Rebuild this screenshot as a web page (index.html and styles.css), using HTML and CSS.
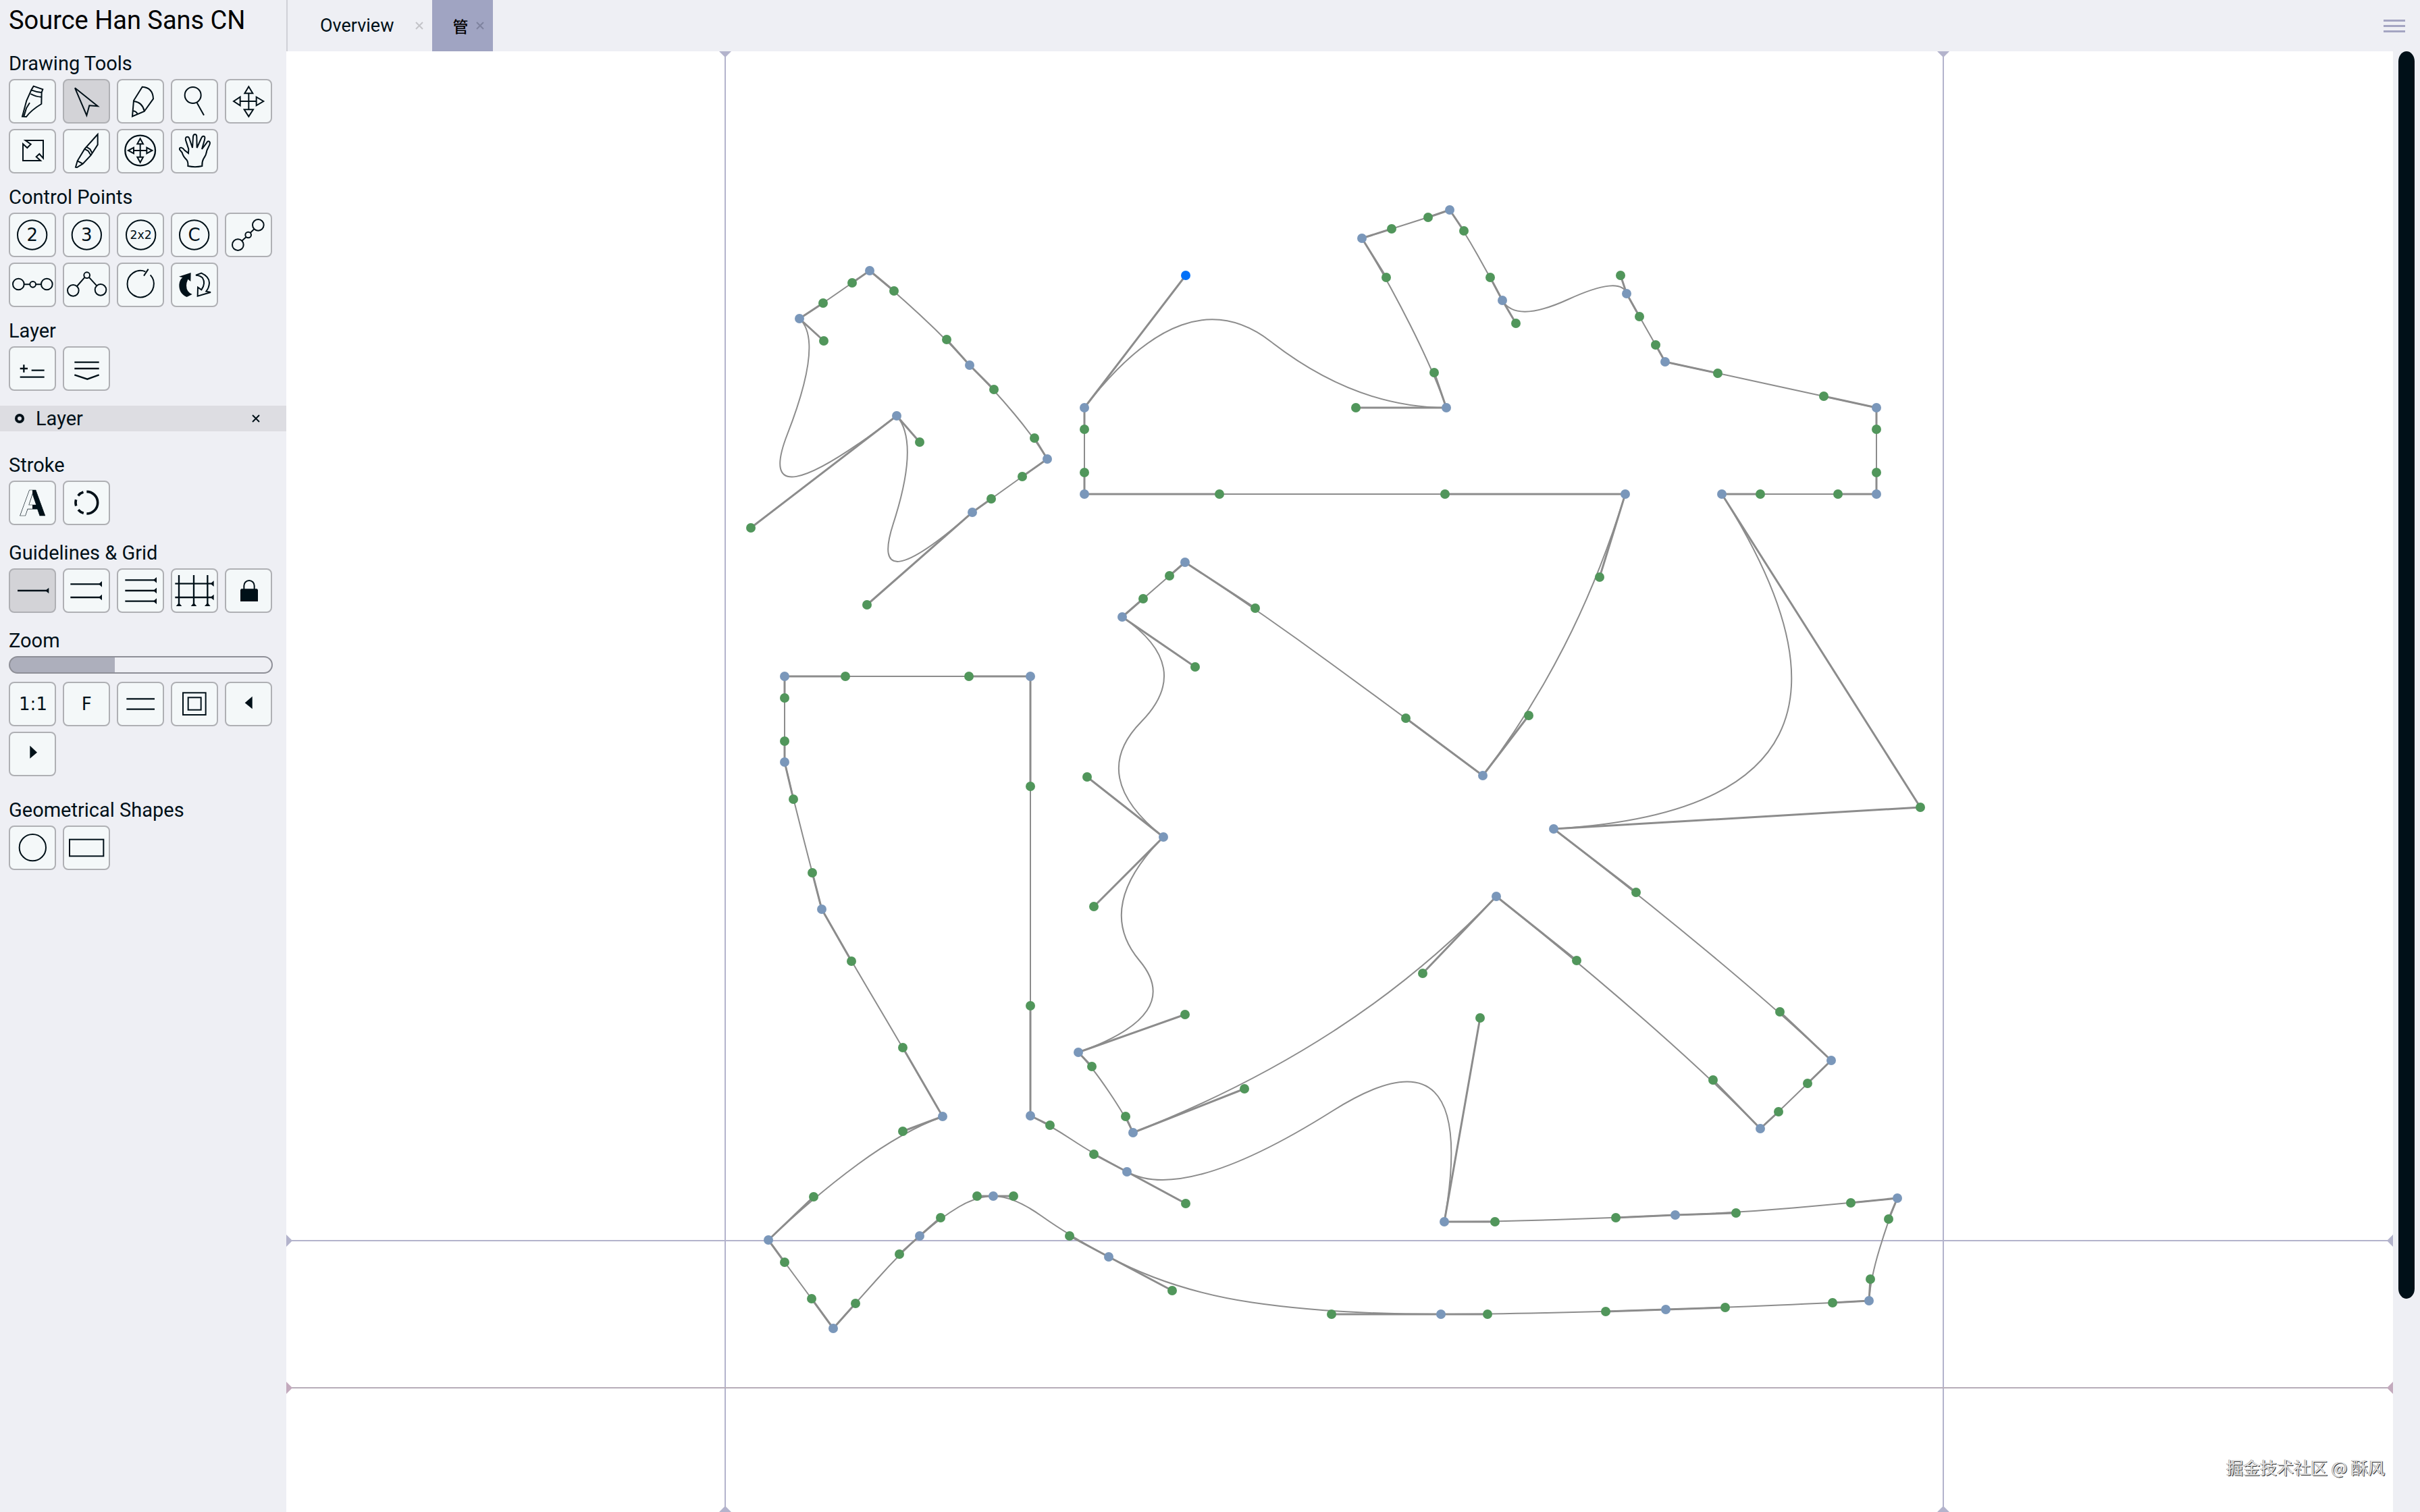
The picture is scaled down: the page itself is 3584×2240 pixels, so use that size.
FILE: index.html
```
<!DOCTYPE html>
<html lang="en">
<head>
<meta charset="UTF-8">
<meta name="viewport" content="width=device-width, initial-scale=1.0">
<title>Source Han Sans CN</title>
<link rel="stylesheet" href="styles.css">
</head>
<body>
<aside class="sidebar">
  <h1>Source Han Sans CN</h1>

  <section class="tools first">
    <h2>Drawing Tools</h2>
    <div class="buttons">
      <button aria-label="Pen"><svg viewBox="6 6 198 186"><path d="M110 32L151 46L146 60Q122 58 100 49ZM97 66Q120 79 145 80M100 49L79 96L60 167L78 168Q100 138 145 111L146 60M67 166L78 130L93 106"/></svg></button>
      <button class="selected" aria-label="Select"><svg viewBox="6 6 198 186"><path d="M54 40L155 121L118 118L106 162Z"/></svg></button>
      <button aria-label="Pencil"><svg viewBox="6 6 198 186"><path d="M113 35Q160 38 162 88L122 144L69 166L75 96ZM77 99Q114 105 122 142M70 141Q88 143 92 157"/></svg></button>
      <button aria-label="Zoom"><svg viewBox="6 6 198 186"><circle cx="98" cy="72" r="36"/><path d="M116 106L147 161"/></svg></button>
      <button aria-label="Move"><svg viewBox="6 6 198 186"><path d="M106 34L88 64H124ZM106 167L86 136H126ZM39 99L68 80V118ZM172 99L140 80V118ZM106 64V136M68 99H140"/></svg></button>
      <button aria-label="Scale"><svg viewBox="6 6 198 186"><path d="M74 51H153V130L136 111L122 124L141 141H63V67L82 84L98 68Z"/></svg></button>
      <button aria-label="Knife"><svg viewBox="6 6 198 186"><path d="M155 24L97 89L65 142L57 170L63 171L89 155L125 117L155 70ZM97 89L113 98L125 117M105 80L121 90L131 108M65 142L89 155"/></svg></button>
      <button aria-label="Move canvas"><svg viewBox="6 6 198 186"><circle class="bold" cx="104" cy="96" r="67"/><path d="M104 43L91 67H117ZM104 149L91 125H117ZM51 96L75 83V109ZM157 96L133 83V109ZM104 67V125M75 96H133"/></svg></button>
      <button aria-label="Hand"><svg viewBox="6 6 198 186"><path d="M76 165Q78 148 70 137Q54 122 50 105L39 92Q37 82 46 83Q56 86 60 94L78 108L79 90L66 50Q63 36 73 35Q81 34 84 48L96 84L99 35Q100 24 107 24Q115 24 115 36L116 84L135 42Q139 31 146 32Q154 34 150 48L138 90L159 62Q164 52 171 56Q176 60 172 70L160 96Q158 115 145 133Q138 146 139 165Q108 172 76 165Z"/></svg></button>
    </div>
  </section>

  <section class="tools">
    <h2>Control Points</h2>
    <div class="buttons">
      <button aria-label="Quadratic"><svg viewBox="6 6 198 186"><circle cx="104" cy="99" r="65"/><text x="104" y="127">2</text></svg></button>
      <button aria-label="Cubic"><svg viewBox="6 6 198 186"><circle cx="106" cy="99" r="65"/><text x="106" y="127">3</text></svg></button>
      <button aria-label="Double quadratic"><svg viewBox="6 6 198 186"><circle cx="107" cy="99" r="65"/><text class="small" x="107" y="117">2x2</text></svg></button>
      <button aria-label="Convert"><svg viewBox="6 6 198 186"><circle cx="104" cy="99" r="65"/><text x="104" y="127">C</text></svg></button>
      <button aria-label="Symmetric handles"><svg viewBox="6 6 198 186"><circle cx="148" cy="55" r="25"/><circle cx="104" cy="99" r="13"/><circle cx="58" cy="143" r="25"/><path d="M130 73L113 90M95 108L76 125"/></svg></button>
      <button aria-label="Line handles"><svg viewBox="6 6 198 186"><circle cx="43" cy="96" r="25"/><circle cx="107" cy="97" r="13"/><circle cx="169" cy="96" r="25"/><path d="M68 97H94M120 97H144"/></svg></button>
      <button aria-label="Corner handles"><svg viewBox="6 6 198 186"><circle cx="107" cy="56" r="13"/><circle cx="46" cy="124" r="25"/><circle cx="168" cy="121" r="25"/><path d="M98 65L63 105M116 65L151 103"/></svg></button>
      <button aria-label="Start point"><svg viewBox="6 6 198 186"><path d="M149 55A59 59 0 1 1 127 40M120 59L140 29"/></svg></button>
      <button aria-label="Reverse path"><svg viewBox="6 6 198 186"><path class="fill" d="M36 62L89 45L88 84L76 74Q62 105 76 127Q84 138 95 141L71 153Q36 138 37 98Q39 76 52 67Z"/><path d="M111 56L136 47Q171 63 171 90Q170 112 157 128L177 132L119 149L120 110L136 121Q156 92 141 68Q130 57 111 56Z"/></svg></button>
    </div>
  </section>

  <section class="tools">
    <h2>Layer</h2>
    <div class="buttons">
      <button aria-label="Add or remove layer"><svg viewBox="6 6 198 186"><path class="bold" d="M50 99H84M67 82V116M101 107H158M50 137H158"/></svg></button>
      <button aria-label="Show layers"><svg viewBox="6 6 198 186"><path class="bold" d="M52 71H161M52 99H161M52 127L109 146L161 127"/></svg></button>
    </div>
  </section>

  <div class="layer-row">
    <svg class="layer-dot" viewBox="0 0 14 14"><circle cx="7" cy="7" r="5"/></svg>
    <span class="layer-name">Layer</span>
    <button class="close" aria-label="Remove layer"><svg viewBox="0 0 12 12"><path d="M1 1L11 11M11 1L1 11"/></svg></button>
  </div>

  <section class="tools spaced">
    <h2>Stroke</h2>
    <div class="buttons">
      <button aria-label="Fill"><svg viewBox="6 6 198 186">
        <defs><linearGradient id="half"><stop offset="0.5" stop-color="#f4f8f9"/><stop offset="0.5" stop-color="#001018"/></linearGradient></defs>
        <text class="half" x="106" y="157">A</text></svg></button>
      <button aria-label="Stroke"><svg viewBox="6 6 198 186"><path class="heavy" d="M106 49A49 49 0 0 1 106 147"/><path class="heavy" stroke-dasharray="0 15 28 20 28 20 28 15" d="M106 49A49 49 0 0 0 106 147"/></svg></button>
    </div>
  </section>

  <section class="tools wide">
    <h2>Guidelines &amp; Grid</h2>
    <div class="buttons">
      <button class="selected" aria-label="Guideline"><svg viewBox="6 6 198 186"><path class="bold" d="M39 99H170"/><path class="fill" d="M163 99L178 86V112Z"/></svg></button>
      <button aria-label="Two guidelines"><svg viewBox="6 6 198 186"><path class="bold" d="M34 70H164M34 129H164"/><path class="fill" d="M159 70L174 57V83ZM159 129L174 116V142Z"/></svg></button>
      <button aria-label="Three guidelines"><svg viewBox="6 6 198 186"><path class="bold" d="M37 52H167M37 99H167M37 146H167"/><path class="fill" d="M162 52L177 39V65ZM162 99L177 86V112ZM162 146L177 133V159Z"/></svg></button>
      <button aria-label="Grid"><svg viewBox="6 6 198 186"><path class="bold" d="M19 68H181M19 129H181M36 30V160M102 30V160M163 30V160"/><path class="fill" d="M176 68L191 55V81ZM176 129L191 116V142ZM36 153L23 168H49ZM102 153L89 168H115ZM163 153L150 168H176Z"/></svg></button>
      <button aria-label="Lock"><svg viewBox="6 6 198 186"><path class="fill" d="M73 91H143L147 95V147H69V95Z"/><path d="M85 93V77A23 23 0 0 1 131 77V93"/></svg></button>
    </div>
  </section>

  <section class="tools wide">
    <h2><label for="zoom">Zoom</label></h2>
    <input class="zoom" id="zoom" type="range" min="0" max="100" value="40">
    <div class="buttons">
      <button aria-label="Actual size"><svg viewBox="6 6 198 186"><text x="108" y="126">1:1</text></svg></button>
      <button aria-label="Full"><svg viewBox="6 6 198 186"><text x="106" y="127">F</text></svg></button>
      <button aria-label="Fit lines"><svg viewBox="6 6 198 186"><path class="bold" d="M43 76H168M43 122H168"/></svg></button>
      <button aria-label="Fit frame"><svg viewBox="6 6 198 186"><rect x="54" y="49" width="101" height="98"/><rect x="77" y="70" width="57" height="55"/></svg></button>
      <button aria-label="Previous"><svg viewBox="6 6 198 186"><path class="fill" d="M89 94L122 65V121Z"/></svg></button>
      <button aria-label="Next"><svg viewBox="6 6 198 186"><path class="fill" d="M94 62L126 92L94 119Z"/></svg></button>
    </div>
  </section>

  <section class="tools spaced">
    <h2>Geometrical Shapes</h2>
    <div class="buttons">
      <button aria-label="Circle"><svg viewBox="6 6 198 186"><circle cx="106" cy="98" r="59"/></svg></button>
      <button aria-label="Rectangle"><svg viewBox="6 6 198 186"><rect x="30" y="62" width="151" height="74"/></svg></button>
    </div>
  </section>
</aside>

<main class="workspace">
  <nav class="tabs">
    <div class="tab">
      <button class="tab-name">Overview</button>
      <button class="close" aria-label="Close Overview"><svg viewBox="0 0 12 12"><path d="M1 1L11 11M11 1L1 11"/></svg></button>
    </div>
    <div class="tab active">
      <button class="tab-name">管</button>
      <button class="close" aria-label="Close 管"><svg viewBox="0 0 12 12"><path d="M1 1L11 11M11 1L1 11"/></svg></button>
    </div>
    <button class="menu" aria-label="Menu"><span></span><span></span><span></span></button>
  </nav>
  <div class="editor">
    <div class="canvas">
      <svg id="glyph" viewBox="424 76 3120 2164" preserveAspectRatio="xMinYMin meet"></svg>
      <div class="watermark">掘金技术社区 @ 酥风</div>
    </div>
    <div class="scrollbar"><div class="thumb"></div></div>
  </div>
</main>
<script src="script.js"></script>
</body>
</html>
```
FILE: styles.css
```
* {
  box-sizing: border-box;
}
body {
  display: flex;
  height: 100vh;
  margin: 0;
  background-color: #eeeff4;
  color: #001018;
  font-family: Roboto, "Noto Sans CJK SC", sans-serif;
  overflow: hidden;
}
button {
  padding: 0;
  border: none;
  background: none;
  color: inherit;
  font: inherit;
  cursor: pointer;
}

/* sidebar */
.sidebar {
  flex: none;
  width: 424px;
}
h1 {
  margin: 8px 13px 0;
  color: #000;
  font-size: 38px;
  font-weight: normal;
  line-height: 44px;
}
h2 {
  margin: 0 0 6px;
  font-size: 29px;
  font-weight: normal;
  line-height: 34px;
}
.tools {
  margin-top: 18px;
  padding: 0 13px;
}
.tools.first { margin-top: 25px; }
.tools.wide { margin-top: 24px; }
.tools.spaced { margin-top: 33px; }
.buttons {
  display: flex;
  flex-wrap: wrap;
  gap: 8px 10px;
}
.buttons button {
  width: 70px;
  height: 66px;
  border: 2px solid #afb0b4;
  border-radius: 8px;
  background-color: #f4f8f9;
}
.buttons button.selected {
  background-color: #d3d3d7;
}
.buttons svg {
  display: block;
  width: 66px;
  height: 62px;
  fill: none;
  stroke: #001018;
  stroke-width: 6;
}
.buttons .bold { stroke-width: 7; }
.buttons .heavy { stroke-width: 11; }
.buttons .fill {
  fill: #001018;
  stroke: none;
}
.buttons text {
  fill: #001018;
  stroke: none;
  font-family: "DejaVu Sans", sans-serif;
  font-size: 78px;
  text-anchor: middle;
}
.buttons text.small { font-size: 52px; }
.buttons text.half {
  fill: url(#half);
  stroke: #001018;
  stroke-width: 2;
  font-family: "Liberation Sans", sans-serif;
  font-size: 166px;
  font-weight: bold;
}
.layer-row {
  display: flex;
  align-items: center;
  height: 38px;
  margin-top: 22px;
  padding: 0 39px 0 22px;
  background-color: #dddde2;
}
.layer-dot {
  width: 14px;
  height: 14px;
  fill: none;
  stroke: #001018;
  stroke-width: 4;
}
.layer-name {
  flex: 1;
  margin-left: 17px;
  font-size: 29px;
  line-height: 34px;
}
.close svg {
  display: block;
  width: 12px;
  height: 12px;
  fill: none;
  stroke: currentColor;
  stroke-width: 2;
}
.zoom {
  display: block;
  width: 100%;
  max-width: 391px;
  height: 26px;
  margin: 0 0 12px;
  border: 2px solid #8e8f97;
  border-radius: 13px;
  background: linear-gradient(to right, #adafbc 40%, transparent 40%);
  -webkit-appearance: none;
  appearance: none;
}
.zoom::-webkit-slider-thumb {
  -webkit-appearance: none;
  width: 0;
}

/* tabs */
.workspace {
  display: flex;
  flex: 1;
  flex-direction: column;
  min-width: 0;
}
.tabs {
  display: flex;
  flex: none;
  height: 76px;
  border-left: 2px solid #d0d1d7;
}
.tab {
  display: flex;
  align-items: center;
  gap: 32px;
  padding: 0 13px 0 48px;
  font-size: 27px;
}
.tab .close { color: #c3c4c8; }
.tab.active {
  gap: 12px;
  padding: 0 13px 0 30px;
  background-color: #a0a4c2;
  color: #000;
  font-size: 23px;
  font-weight: 500;
}
.tab.active .close { color: #7f839f; }
.menu {
  display: flex;
  flex-direction: column;
  justify-content: center;
  gap: 5px;
  margin: 0 22px 0 auto;
}
.menu span {
  width: 32px;
  height: 3px;
  background-color: #a4a5c2;
}

/* glyph editor */
.editor {
  display: flex;
  flex: 1;
  min-height: 0;
}
.canvas {
  position: relative;
  flex: 1;
  min-width: 0;
  background-color: #fff;
  overflow: hidden;
}
#glyph {
  display: block;
  width: 100%;
  height: 100%;
  fill: none;
}
.guide { stroke: #b3b3cc; stroke-width: 2; }
.guide-end { fill: #b3b3cc; }
.guide.descender { stroke: #b7adb9; }
.guide-end.descender { fill: #c3aabd; }
.outline { stroke: #8c8c8c; stroke-width: 2; }
.handle { stroke: #8c8c8c; stroke-width: 3; }
.on { fill: #7a97ba; }
.off { fill: #51965b; }
.off.picked { fill: #0070f8; }
.watermark {
  position: absolute;
  right: 12px;
  bottom: 48px;
  color: #e2e2e2;
  font-family: "Noto Sans CJK SC", sans-serif;
  font-size: 25px;
  line-height: 38px;
  text-shadow: 1px 1px 0 #333, -1px 0 0 #aaa;
}
.scrollbar {
  flex: none;
  width: 40px;
  padding: 0 8px;
}
.thumb {
  height: 85.4%;
  border-radius: 12px / 15px;
  background-color: #001018;
}
```
FILE: script.js
```
// Contours of the glyph: [x, y] is on the curve, [x, y, 1] is a control point,
// [x, y, 2] is the control point that is selected
const contours = [
  [
    [1288, 401], [1262, 419, 1], [1219, 449, 1], [1184, 472], [1220, 505, 1], [1112, 782, 1],
    [1328, 616], [1362, 655, 1], [1284, 896, 1], [1440, 759], [1468, 739, 1], [1514, 706, 1],
    [1551, 680], [1532, 649, 1], [1472, 577, 1], [1436, 541], [1402, 503, 1], [1324, 431, 1]
  ],
  [
    [1606, 604], [1756, 408, 2], [2008, 604, 1], [2142, 604], [2124, 552, 1], [2053, 411, 1],
    [2017, 353], [2061, 339, 1], [2115, 322, 1], [2147, 311], [2168, 342, 1], [2207, 411, 1],
    [2225, 445], [2245, 479, 1], [2400, 408, 1], [2409, 435], [2428, 469, 1], [2452, 511, 1],
    [2466, 536], [2544, 553, 1], [2701, 587, 1], [2779, 604], [2779, 636, 1], [2779, 700, 1],
    [2779, 732], [2722, 732, 1], [2607, 732, 1], [2550, 732], [2844, 1196, 1],
    [2301, 1228], [2423, 1322, 1], [2636, 1499, 1], [2712, 1571], [2677, 1605, 1], [2634, 1647, 1],
    [2607, 1672], [2537, 1600, 1], [2335, 1423, 1], [2216, 1328], [2107, 1442, 1], [1843, 1613, 1],
    [1678, 1678], [1667, 1654, 1], [1617, 1580, 1], [1597, 1559], [1755, 1503, 1], [1620, 1343, 1],
    [1723, 1240], [1610, 1151, 1], [1770, 988, 1], [1662, 914], [1693, 887, 1], [1732, 853, 1],
    [1755, 833], [1859, 901, 1], [2082, 1064, 1], [2196, 1149], [2264, 1060, 1], [2369, 855, 1],
    [2407, 732], [2140, 732, 1], [1806, 732, 1], [1606, 732], [1606, 700, 1], [1606, 636, 1]
  ],
  [
    [1162, 1002], [1252, 1002, 1], [1435, 1002, 1], [1526, 1002], [1526, 1165, 1], [1526, 1490, 1],
    [1526, 1653], [1555, 1667, 1], [1620, 1710, 1], [1669, 1736], [1756, 1783, 1], [2192, 1508, 1],
    [2139, 1810], [2214, 1810, 1], [2393, 1804, 1], [2481, 1800], [2571, 1797, 1], [2741, 1782, 1],
    [2810, 1775], [2797, 1806, 1], [2770, 1895, 1], [2768, 1927], [2714, 1930, 1], [2555, 1937, 1],
    [2467, 1940], [2378, 1943, 1], [2203, 1947, 1], [2134, 1947], [1972, 1947, 1], [1736, 1912, 1],
    [1642, 1862], [1584, 1831, 1], [1501, 1772, 1], [1471, 1772], [1447, 1772, 1], [1393, 1804, 1],
    [1362, 1831], [1332, 1858, 1], [1267, 1931, 1], [1234, 1968], [1202, 1924, 1], [1162, 1870, 1],
    [1138, 1837], [1205, 1773, 1], [1337, 1676, 1], [1396, 1654], [1337, 1552, 1], [1261, 1424, 1],
    [1217, 1347], [1203, 1293, 1], [1175, 1184, 1], [1162, 1129], [1162, 1098, 1], [1162, 1034, 1]
  ]
];

const glyph = document.getElementById('glyph');

function draw(tag, className, attributes) {
  const node = document.createElementNS('http://www.w3.org/2000/svg', tag);
  node.setAttribute('class', className);
  for (const name in attributes) {
    node.setAttribute(name, attributes[name]);
  }
  glyph.appendChild(node);
}

// Guidelines, with an arrow at each edge of the canvas
for (const x of [1074, 2878]) {
  draw('path', 'guide', { d: `M${x} 76V2240` });
  draw('path', 'guide-end', { d: `M${x - 9} 76H${x + 9}L${x} 85ZM${x - 9} 2240H${x + 9}L${x} 2231Z` });
}
for (const [y, type] of [[1838, ''], [2056, ' descender']]) {
  draw('path', 'guide' + type, { d: `M424 ${y}H3544` });
  draw('path', 'guide-end' + type, { d: `M424 ${y - 9}V${y + 9}L433 ${y}ZM3544 ${y - 9}V${y + 9}L3535 ${y}Z` });
}

// Two control points in a row have an implied point half way between them
for (const points of contours) {
  const at = i => points[(i + points.length) % points.length];
  let outline = `M${points[0][0]} ${points[0][1]}`;
  let handles = '';
  points.forEach(([x, y, off], i) => {
    if (!off) return;
    const next = at(i + 1);
    const previous = at(i - 1);
    if (next[2]) {
      outline += `Q${x} ${y} ${(x + next[0]) / 2} ${(y + next[1]) / 2}`;
    } else {
      outline += `Q${x} ${y} ${next[0]} ${next[1]}`;
      handles += `M${x} ${y}L${next[0]} ${next[1]}`;
    }
    if (!previous[2]) {
      handles += `M${x} ${y}L${previous[0]} ${previous[1]}`;
    }
  });
  draw('path', 'outline', { d: outline });
  draw('path', 'handle', { d: handles });
  for (const [x, y, off] of points) {
    const type = off === 2 ? 'off picked' : off ? 'off' : 'on';
    draw('circle', type, { cx: x, cy: y, r: 7 });
  }
}
```
